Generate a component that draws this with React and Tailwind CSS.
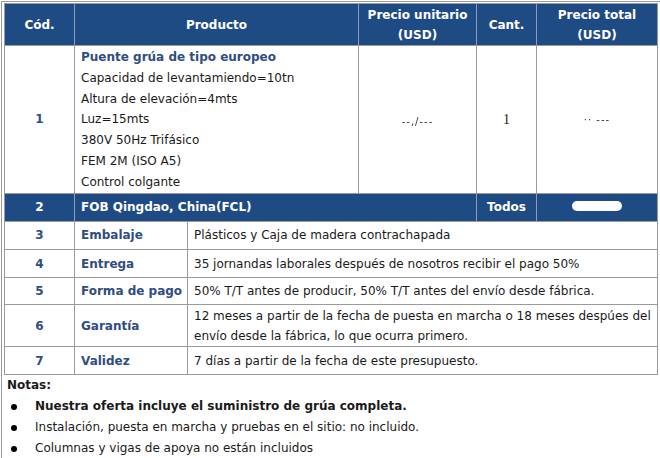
const blue = 'bg-[#1f4b85]';

const specs = [
  'Capacidad de levantamiendo=10tn',
  'Altura de elevación=4mts',
  'Luz=15mts',
  '380V 50Hz Trifásico',
  'FEM 2M (ISO A5)',
  'Control colgante',
];

const terms = [
  { n: '3', label: 'Embalaje', text: ['Plásticos y Caja de madera contrachapada'], h: 'h-[28px]' },
  { n: '4', label: 'Entrega', text: ['35 jornandas laborales después de nosotros recibir el pago 50%'], h: 'h-[28px]' },
  { n: '5', label: 'Forma de pago', text: ['50% T/T antes de producir, 50% T/T antes del envío desde fábrica.'], h: 'h-[27px]' },
  {
    n: '6',
    label: 'Garantía',
    text: [
      '12 meses a partir de la fecha de puesta en marcha o 18 meses despúes del',
      'envío desde la fábrica, lo que ocurra primero.',
    ],
    h: 'h-[42px]',
  },
  { n: '7', label: 'Validez', text: ['7 días a partir de la fecha de este presupuesto.'], h: 'h-[28px]' },
];

const notes = [
  { text: 'Nuestra oferta incluye el suministro de grúa completa.', bold: true },
  { text: 'Instalación, puesta en marcha y pruebas en el sitio: no incluido.' },
  { text: 'Columnas y vigas de apoya no están incluidos' },
];

const cell = 'border border-[#9a9a9a]';
const headCell = 'border border-[#9a9a9a] border-x-[#8d9bb3]';

export default function App() {
  return (
    <div className="w-[660px] h-[458px] overflow-hidden bg-white font-['DejaVu_Sans',Verdana,sans-serif] text-[12px] text-[#1a1a1a]">
      <div className="ml-[1px] mt-[1px] border-l border-t border-[#9a9a9a] pl-[2px] pt-[1px] h-full">
        <table className="table-fixed border-collapse w-[653px]">
          <colgroup>
            <col className="w-[70px]" />
            <col className="w-[284px]" />
            <col className="w-[118px]" />
            <col className="w-[60px]" />
            <col className="w-[121px]" />
          </colgroup>
          <tbody>
            <tr className={`${blue} text-white font-bold h-[42px]`}>
              <td className={`${headCell} text-center`}>Cód.</td>
              <td className={`${headCell} text-center`}>Producto</td>
              <td className={`${headCell} text-center leading-[20px]`}>
                Precio unitario
                <br />
                (USD)
              </td>
              <td className={`${headCell} text-center`}>Cant.</td>
              <td className={`${headCell} text-center leading-[20px]`}>
                Precio total
                <br />
                (USD)
              </td>
            </tr>
            <tr className="h-[145px]">
              <td className={`${cell} text-center font-bold text-[#2f4d80]`}>1</td>
              <td className={`${cell} px-[6px] pt-[1px] leading-[20.8px]`}>
                <div className="font-bold text-[#2f4d80]">Puente grúa de tipo europeo</div>
                {specs.map((s) => (
                  <div key={s}>{s}</div>
                ))}
              </td>
              <td className={`${cell} text-center`}>
                <span className="inline-block mt-[6px] text-[10px] tracking-[1px] text-[#333] blur-[0.3px]">--,/---</span>
              </td>
              <td className={`${cell} text-center font-['Liberation_Serif',serif] text-[14px]`}>1</td>
              <td className={`${cell} text-center`}>
                <span className="inline-block -mt-[8px] text-[10px] tracking-[1px] text-[#333] blur-[0.3px]">·· ---</span>
              </td>
            </tr>
            <tr className={`${blue} text-white font-bold h-[28px]`}>
              <td className={`${headCell} text-center`}>2</td>
              <td colSpan={2} className={`${headCell} px-[6px]`}>FOB Qingdao, China(FCL)</td>
              <td className={`${headCell} text-center`}>Todos</td>
              <td className={`${headCell} text-center`}>
                <span className="inline-block w-[50px] h-[10px] mt-[2px] rounded-full bg-white blur-[0.5px]" />
              </td>
            </tr>
          </tbody>
        </table>
        <table className="table-fixed border-collapse w-[653px]">
          <colgroup>
            <col className="w-[70px]" />
            <col className="w-[113px]" />
            <col className="w-[470px]" />
          </colgroup>
          <tbody>
            {terms.map((t) => (
              <tr key={t.n} className={t.h}>
                <td className={`${cell} border-t-0 text-center font-bold text-[#2f4d80]`}>{t.n}</td>
                <td className={`${cell} border-t-0 px-[6px] font-bold text-[#2f4d80] whitespace-nowrap`}>{t.label}</td>
                <td className={`${cell} border-t-0 px-[6px] leading-[20px]`}>
                  {t.text.map((l) => (
                    <div key={l}>{l}</div>
                  ))}
                </td>
              </tr>
            ))}
          </tbody>
        </table>
        <div className="pl-[3px] pt-0">
          <div className="font-bold h-[21px] leading-[21px]">Notas:</div>
          {notes.map((n) => (
            <div key={n.text} className="flex items-center h-[21px] leading-[21px]">
              <span className="w-[28px] pl-[4px] flex items-center">
                <span className="block w-[6px] h-[6px] rounded-full bg-black" />
              </span>
              <span className={n.bold ? 'font-bold' : ''}>{n.text}</span>
            </div>
          ))}
        </div>
      </div>
    </div>
  );
}
